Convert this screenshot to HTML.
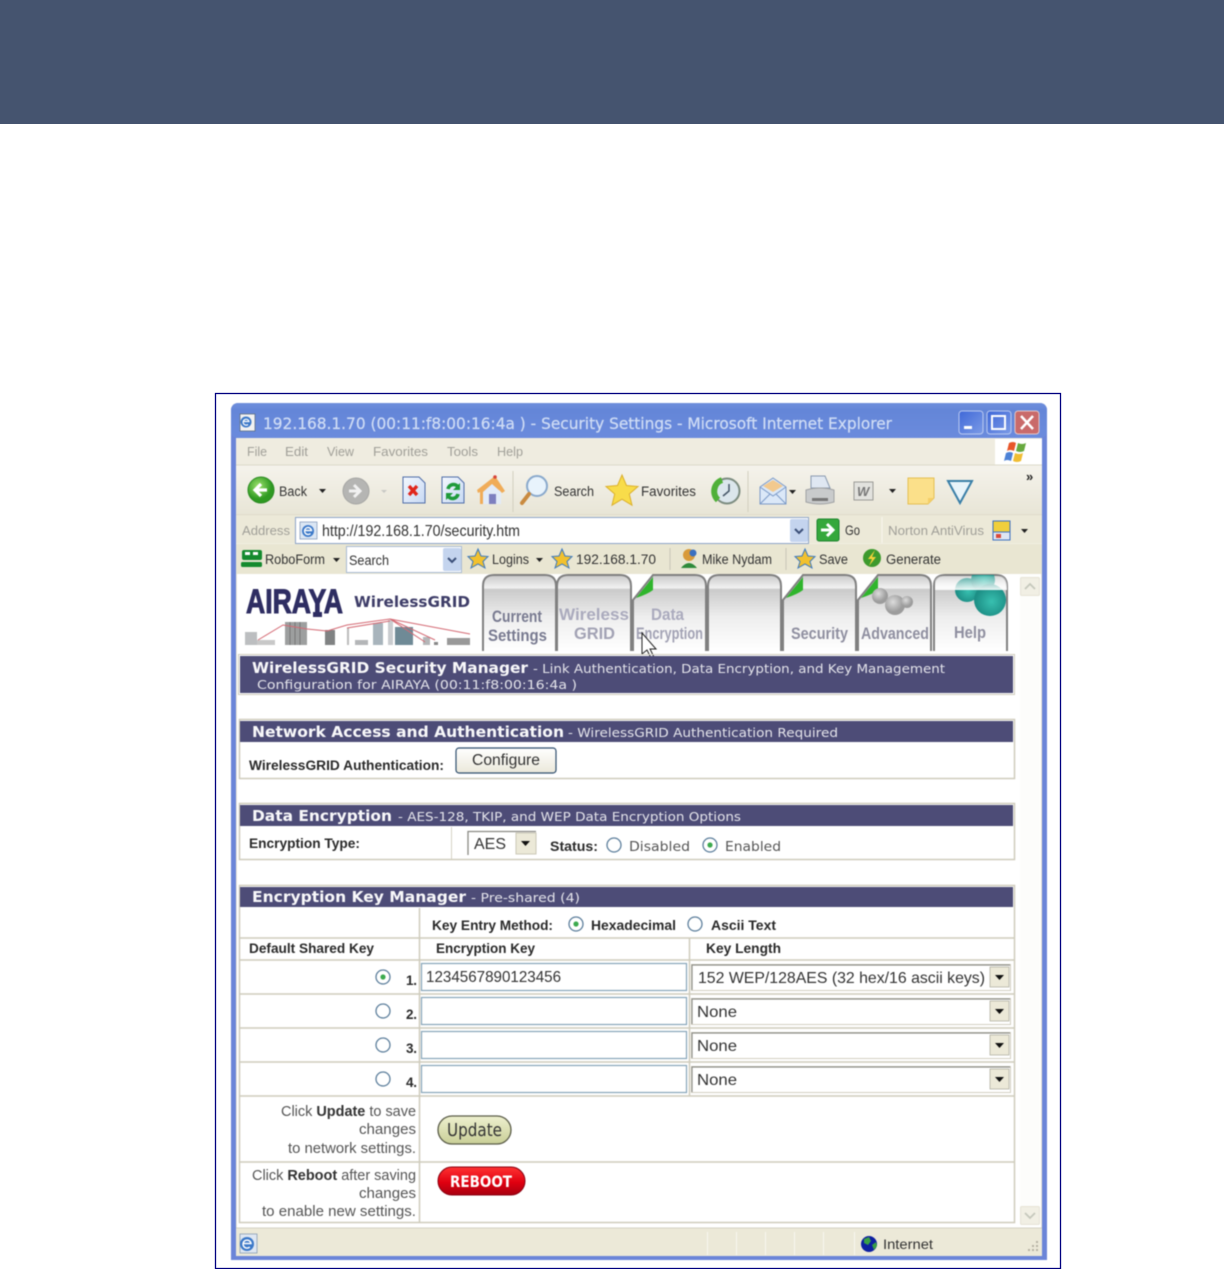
<!DOCTYPE html>
<html><head><meta charset="utf-8"><title>Security Settings</title>
<style>
html,body{margin:0;padding:0;background:#fff;width:1224px;height:1269px;overflow:hidden}
svg{display:block;position:absolute;left:0;top:0}
text{white-space:pre}
.s{font-family:"Liberation Sans",sans-serif}
.d{font-family:"DejaVu Sans",sans-serif}
.b{font-weight:bold}
.w{fill:#fff;font-family:"DejaVu Sans",sans-serif;font-size:12px;fill-opacity:.85}
.h{fill:#fff;font-family:"DejaVu Sans",sans-serif;font-weight:bold;font-size:15px;fill-opacity:.96}
.m{fill:#a09f98;font-family:"Liberation Sans",sans-serif;font-size:13px}
.t{fill:#333;font-family:"Liberation Sans",sans-serif;font-size:13.5px}
.k{fill:#2a2a2a;font-family:"Liberation Sans",sans-serif;font-weight:bold;font-size:13.5px}
.g{fill:#555;font-family:"Liberation Sans",sans-serif;font-size:14.5px}
.f{fill:#333;font-family:"Liberation Sans",sans-serif;font-size:16px}
.tab{font-family:"Liberation Sans",sans-serif;font-weight:bold;font-size:17px}
</style></head><body>
<svg width="1224" height="1269" viewBox="0 0 1224 1269" xmlns="http://www.w3.org/2000/svg">
<defs>
<linearGradient id="tb" x1="0" y1="0" x2="0" y2="1"><stop offset="0" stop-color="#6f8fdc"/><stop offset=".2" stop-color="#6486d8"/><stop offset="1" stop-color="#6b8bdd"/></linearGradient>
<linearGradient id="tg" x1="0" y1="0" x2="0" y2="1"><stop offset="0" stop-color="#c8c8c8"/><stop offset=".17" stop-color="#f2f2f2"/><stop offset=".19" stop-color="#cacaca"/><stop offset=".55" stop-color="#eeeeee"/><stop offset="1" stop-color="#fff"/></linearGradient>
<linearGradient id="band" x1="0" y1="0" x2="0" y2="1"><stop offset="0" stop-color="#fff" stop-opacity=".25"/><stop offset="1" stop-color="#fff" stop-opacity=".9"/></linearGradient>
<linearGradient id="tool" x1="0" y1="0" x2="0" y2="1"><stop offset="0" stop-color="#f5f3ec"/><stop offset="1" stop-color="#e8e5d6"/></linearGradient>
<linearGradient id="upd" x1="0" y1="0" x2="0" y2="1"><stop offset="0" stop-color="#eef0cf"/><stop offset="1" stop-color="#c9cf98"/></linearGradient>
<linearGradient id="red" x1="0" y1="0" x2="0" y2="1"><stop offset="0" stop-color="#f33"/><stop offset=".55" stop-color="#e00010"/><stop offset="1" stop-color="#a80010"/></linearGradient>
<linearGradient id="cfg" x1="0" y1="0" x2="0" y2="1"><stop offset="0" stop-color="#fff"/><stop offset="1" stop-color="#ebe8da"/></linearGradient>
<linearGradient id="min" x1="0" y1="0" x2="1" y2="1"><stop offset="0" stop-color="#3f68d8"/><stop offset="1" stop-color="#7c9be6"/></linearGradient>
<linearGradient id="page" x1="0" y1="0" x2="1" y2="1"><stop offset="0" stop-color="#f4f8fe"/><stop offset="1" stop-color="#c7d9f4"/></linearGradient>
<radialGradient id="gb" cx=".4" cy=".35"><stop offset="0" stop-color="#9fe36e"/><stop offset="1" stop-color="#2f9a22"/></radialGradient>
<radialGradient id="ball" cx=".4" cy=".35"><stop offset="0" stop-color="#dcdcdc"/><stop offset="1" stop-color="#9c9c9c"/></radialGradient>
<radialGradient id="teal" cx=".55" cy=".55"><stop offset="0" stop-color="#38c0b0"/><stop offset="1" stop-color="#1d8f86"/></radialGradient>
<clipPath id="helpclip"><path d="M934 651V586q0-11 11-11h51q11 0 11 11v65z"/></clipPath>
<g id="r"><circle r="7" fill="#fff" stroke="#5d7f9c" stroke-width="1.3"/></g>
<g id="rs"><circle r="7" fill="#fff" stroke="#5d7f9c" stroke-width="1.3"/><circle r="2.6" fill="#3daa4e"/></g>
<g id="sb"><rect width="19" height="20" fill="#ece9d8" stroke="#aaa89a" stroke-width=".7"/><path d="M5 8h9l-4.500 5z" fill="#111"/></g>
</defs>

<rect x="0" y="0" width="1224" height="124" fill="#45546f"/>
<rect x="215.500" y="393.500" width="845" height="875" fill="#fff" stroke="#00007f" stroke-width="1.300"/>

<g style="filter:blur(.5px)">
<!-- window -->
<path d="M231 411 Q231 403 239 403 H1039 Q1047 403 1047 411 V1260 H231 Z" fill="#6b85d8"/>
<rect x="231" y="403" width="816" height="35" rx="7" fill="url(#tb)"/>
<rect x="236" y="438" width="806" height="818" fill="#ece9d8"/>
<text class="d" x="263" y="429" font-size="16" fill="#cfdcf5" stroke="#cfdcf5" stroke-width=".25" textLength="629" lengthAdjust="spacingAndGlyphs">192.168.1.70 (00:11:f8:00:16:4a ) - Security Settings - Microsoft Internet Explorer</text>
<rect x="240" y="414" width="15" height="17" fill="#f2f2f2" stroke="#567" stroke-width=".7"/><circle cx="246" cy="422" r="5.500" fill="#3b78c8"/><path d="M243 421.500h6a3 3 0 1 0-1 3" stroke="#fff" stroke-width="1.200" fill="none"/>
<rect x="959" y="411" width="24" height="23" rx="3" fill="url(#min)" stroke="#b9c9f0"/><rect x="964" y="426" width="8" height="3" fill="#fff"/>
<rect x="987" y="411" width="24" height="23" rx="3" fill="url(#min)" stroke="#b9c9f0"/><rect x="992" y="416" width="13" height="13" fill="none" stroke="#fff" stroke-width="2"/>
<rect x="1015" y="411" width="24" height="23" rx="3" fill="#c96a6a" stroke="#e3c8c8"/><path d="M1021 416 L1033 429 M1033 416 L1021 429" stroke="#fff" stroke-width="2.500"/>

<!-- menu -->
<rect x="236" y="438" width="806" height="27" fill="#efece0"/>
<rect x="995" y="439" width="47" height="26" fill="#fff"/>
<path d="M1009 443 q4-2 7 0 l-2 8 q-4-2-7 0z" fill="#e8562a"/><path d="M1018 443 q4 2 8 0 l-2 8 q-4 2-8 0z" fill="#67a93f"/><path d="M1006 453 q4-2 7 0 l-2 8 q-4-2-7 0z" fill="#4d82d6"/><path d="M1015 453 q4 2 8 0 l-2 8 q-4 2-8 0z" fill="#f0bd32"/>
<text class="m" x="247" y="456" textLength="20" lengthAdjust="spacingAndGlyphs">File</text>
<text class="m" x="285" y="456" textLength="23" lengthAdjust="spacingAndGlyphs">Edit</text>
<text class="m" x="327" y="456" textLength="27" lengthAdjust="spacingAndGlyphs">View</text>
<text class="m" x="373" y="456" textLength="55" lengthAdjust="spacingAndGlyphs">Favorites</text>
<text class="m" x="447" y="456" textLength="31" lengthAdjust="spacingAndGlyphs">Tools</text>
<text class="m" x="497" y="456" textLength="26" lengthAdjust="spacingAndGlyphs">Help</text>

<!-- toolbar -->
<rect x="236" y="465" width="806" height="50" fill="url(#tool)"/>
<line x1="236" y1="465" x2="1042" y2="465" fill="none" stroke="#dcd9c9"/>
<line x1="236" y1="515" x2="1042" y2="515" fill="none" stroke="#d5d2c2"/>
<circle cx="261" cy="490" r="13" fill="url(#gb)" stroke="#2b8a22"/><path d="M267 490h-10M261 484l-6 6 6 6" fill="none" stroke="#fff" stroke-width="3.200"/>
<text class="t" x="279" y="496" textLength="28" lengthAdjust="spacingAndGlyphs">Back</text>
<path d="M319 489h7l-3.500 4z" fill="#222"/>
<circle cx="356" cy="491" r="13" fill="#b5b5b3" stroke="#a5a5a3"/><path d="M349 491h11M354 485l6 6-6 6" fill="none" stroke="#f1f1f1" stroke-width="3"/>
<path d="M381 490h6l-3 3z" fill="#c8c8c4"/>
<path d="M403 477h16l6 6v20h-22z" fill="url(#page)" stroke="#4e6ca8"/><path d="M409 486 l8 9 M417 486 l-8 9" stroke="#e0261c" stroke-width="3.400"/>
<path d="M442 477h16l6 6v20h-22z" fill="url(#page)" stroke="#4e6ca8"/><path d="M448 489a5.500 5.500 0 0 1 10-2M458 494a5.500 5.500 0 0 1-10 2" fill="none" stroke="#1f9a3a" stroke-width="3.600"/><path d="M460 483v7h-7zM446 500v-7h7z" fill="#1f9a3a"/>
<path d="M495 476l10 15-3 2-3-3v14h-19v-12l-2 1-1-3z" fill="#f0ac58"/><path d="M483 492l9-8 9 8v12h-18z" fill="#e2ebf8"/><rect x="489" y="494" width="7" height="10" fill="#7d7fbf"/><circle cx="495" cy="477" r="1.800" fill="#d6453a"/>
<line x1="513" y1="471" x2="513" y2="512" fill="none" stroke="#d2cfbf"/>
<circle cx="537" cy="486" r="10" fill="#e8f3fc" stroke="#8aa9cc" stroke-width="2"/><line x1="529" y1="494" x2="522" y2="503" stroke="#c98a3f" stroke-width="4" stroke-linecap="round"/>
<text class="t" x="554" y="496" textLength="40" lengthAdjust="spacingAndGlyphs">Search</text>
<path d="M622 475l4.500 10.500 11.500 1-8.700 7.500 2.700 11.200-10-6-10 6 2.700-11.200-8.700-7.500 11.500-1z" fill="#f8dc4a" stroke="#dcb02a"/>
<text class="t" x="641" y="496" textLength="55" lengthAdjust="spacingAndGlyphs">Favorites</text>
<circle cx="727" cy="491" r="12.500" fill="#dbe6ec" stroke="#7c8c80" stroke-width="2"/><path d="M718 500a12 12 0 0 1 4-20" fill="none" stroke="#4fb038" stroke-width="6"/><path d="M729 484v7l-6 5" fill="none" stroke="#456" stroke-width="1.500"/>
<line x1="748" y1="471" x2="748" y2="512" fill="none" stroke="#d2cfbf"/>
<path d="M760 487l13-9 13 9v17h-26z" fill="#dbe8f8" stroke="#7d9bc8"/><path d="M763 486l10-6 10 6-10 6z" fill="#f2c98e"/><path d="M760 487l13 9 13-9M760 504l10-10M786 504l-10-10" fill="none" stroke="#7d9bc8"/>
<path d="M789 490h7l-3.500 4z" fill="#222"/>
<path d="M811 476h14l5 12h-19z" fill="#dfe7f2" stroke="#8a9ab0"/><path d="M806 490q14-4 28 0v12q-14 4-28 0z" fill="#c9cbcc" stroke="#a0a2a4"/><rect x="812" y="498" width="16" height="3" fill="#777"/>
<rect x="854" y="482" width="19" height="18" fill="#e2e2de" stroke="#9a9a96"/><text class="s" x="857" y="496" font-size="13" font-style="italic" font-weight="bold" fill="#777">W</text>
<path d="M889 489h7l-3.500 4z" fill="#222"/>
<path d="M908 478h26v20l-6 6h-20z" fill="#fbe08a" stroke="#e5bf52"/><path d="M934 498l-6 6v-6z" fill="#f5ce66"/>
<path d="M948 481h24l-12 22z" fill="#e8f4fa" stroke="#3a7fa8" stroke-width="2"/>
<text class="s b" x="1026" y="481" font-size="13" fill="#222">»</text>

<!-- address -->
<rect x="236" y="515" width="806" height="29" fill="#ece9d8"/>
<line x1="236" y1="544" x2="1042" y2="544" fill="none" stroke="#f6f4ec"/>
<text class="m" x="242" y="535" font-size="14" textLength="48" lengthAdjust="spacingAndGlyphs">Address</text>
<rect x="295.500" y="517.500" width="513" height="26" fill="#fff" stroke="#8ea5c8"/>
<rect x="300" y="522" width="17" height="17" fill="#dbe6f4" stroke="#7b91b3" stroke-width=".7"/><circle cx="308" cy="531" r="6" fill="#3b78c8"/><path d="M304.500 530.500h7a3.500 3.500 0 1 0-1 3" fill="none" stroke="#fff" stroke-width="1.400"/>
<text class="f" x="322" y="536" font-size="14" fill="#222" textLength="198" lengthAdjust="spacingAndGlyphs">http://192.168.1.70/security.htm</text>
<rect x="790" y="519" width="18" height="23" rx="2" fill="#c4d4ee"/><path d="M795 529l4 4 4-4" fill="none" stroke="#3b4f78" stroke-width="2"/>
<rect x="817" y="519" width="22" height="22" rx="2" fill="#35a83b" stroke="#1d8430"/><path d="M821 530h11M827 524l6 6-6 6" fill="none" stroke="#fff" stroke-width="3"/>
<text class="t" x="845" y="535" textLength="15" lengthAdjust="spacingAndGlyphs">Go</text>
<line x1="882" y1="517" x2="882" y2="543" fill="none" stroke="#f8f6ef"/>
<text class="m" x="888" y="535" font-size="14" textLength="96" lengthAdjust="spacingAndGlyphs">Norton AntiVirus</text>
<rect x="993" y="521" width="17" height="11" fill="#f0cf3c" stroke="#3c6fc0"/><rect x="993" y="532" width="17" height="8" fill="#dfe6f2" stroke="#3c6fc0"/><rect x="996" y="534" width="5" height="4" fill="#d9483a"/>
<path d="M1021 529h7l-3.500 4z" fill="#222"/>

<!-- roboform -->
<rect x="236" y="544" width="806" height="30" fill="#e9e6d2"/>
<rect x="242" y="550" width="20" height="10" rx="2" fill="#148a2e"/><rect x="245" y="552" width="5" height="3" fill="#fff"/><rect x="253" y="552" width="5" height="3" fill="#fff"/><rect x="241" y="562" width="21" height="5" rx="1.500" fill="#148a2e"/>
<text class="t" x="265" y="564" textLength="60" lengthAdjust="spacingAndGlyphs">RoboForm</text>
<path d="M333 558h7l-3.500 4z" fill="#222"/>
<rect x="346.500" y="546.500" width="115" height="26" fill="#fff" stroke="#a9bbd4"/>
<text class="t" x="349" y="565" textLength="40" lengthAdjust="spacingAndGlyphs">Search</text>
<rect x="443" y="548" width="18" height="23" rx="2" fill="#c4d4ee"/><path d="M448 558l4 4 4-4" fill="none" stroke="#3b4f78" stroke-width="2"/>
<path d="M478 549l3 7 7 .5-5 5 2 6.500-7-4-7 4 2-6.500-5-5 7-.5z" fill="#f2c12e" stroke="#3a78c0"/>
<text class="t" x="492" y="564" textLength="37" lengthAdjust="spacingAndGlyphs">Logins</text>
<path d="M536 558h7l-3.500 4z" fill="#222"/>
<path d="M562 549l3 7 7 .5-5 5 2 6.500-7-4-7 4 2-6.500-5-5 7-.5z" fill="#f2c12e" stroke="#3a78c0"/>
<text class="t" x="576" y="564" textLength="80" lengthAdjust="spacingAndGlyphs">192.168.1.70</text>
<line x1="670" y1="548" x2="670" y2="570" fill="none" stroke="#c9c6b6"/>
<circle cx="689" cy="555" r="6" fill="#d89a3a"/><path d="M681 568q8-10 16 0z" fill="#2e8a3a"/><circle cx="693" cy="553" r="3.500" fill="#3a70c0"/>
<text class="t" x="702" y="564" textLength="70" lengthAdjust="spacingAndGlyphs">Mike Nydam</text>
<line x1="786" y1="548" x2="786" y2="570" fill="none" stroke="#c9c6b6"/>
<path d="M805 549l3 7 7 .5-5 5 2 6.500-7-4-7 4 2-6.500-5-5 7-.5z" fill="#f2c12e" stroke="#3a78c0"/>
<text class="t" x="819" y="564" textLength="29" lengthAdjust="spacingAndGlyphs">Save</text>
<circle cx="872" cy="558" r="9" fill="#3d9a2d"/><path d="M875 550l-7 9h4l-3 7 7-9h-4z" fill="#f5d23a"/>
<text class="t" x="886" y="564" textLength="55" lengthAdjust="spacingAndGlyphs">Generate</text>

<!-- content -->
<rect x="237" y="574" width="804" height="654" fill="#fff"/>
<rect x="1020" y="575" width="20" height="650" fill="#fdfdfb"/>
<rect x="1020.500" y="577.500" width="19" height="18" rx="1.500" fill="#f1efe4" stroke="#e6e3d6"/><path d="M1025 589l5-5 5 5" fill="none" stroke="#c6c8bc" stroke-width="1.800"/>
<rect x="1020.500" y="1206.500" width="19" height="18" rx="1.500" fill="#f1efe4" stroke="#e6e3d6"/><path d="M1025 1213l5 5 5-5" fill="none" stroke="#c6c8bc" stroke-width="1.800"/>

<!-- logo -->
<text class="s b" x="246" y="613" font-size="34" fill="#2e2d62" stroke="#2e2d62" stroke-width="1" textLength="97" lengthAdjust="spacingAndGlyphs">AIRAYA</text>
<rect x="313" y="612" width="9" height="5" fill="#2e2d62"/>
<text class="d b" x="354" y="607" font-size="15" fill="#3e3d68" textLength="116" lengthAdjust="spacingAndGlyphs">WirelessGRID</text>
<g>
<rect x="245" y="632" width="12" height="13" fill="#bcbec0"/><rect x="257" y="640" width="18" height="5" fill="#c8c8c8"/>
<rect x="285" y="622" width="22" height="23" fill="#9d9f9f"/><path d="M290 622v23M295 622v23M300 622v23" stroke="#777" stroke-width="1"/>
<rect x="325" y="630" width="10" height="15" fill="#808283"/>
<rect x="347" y="628" width="2" height="17" fill="#bbb"/><rect x="355" y="640" width="13" height="5" fill="#b4b6b8"/>
<rect x="373" y="623" width="10" height="22" fill="#a8b4bc"/>
<rect x="388" y="620" width="5" height="25" fill="#c9cccf"/><rect x="395" y="627" width="18" height="18" fill="#6f8a96"/>
<rect x="423" y="637" width="7" height="8" fill="#b4b6b8"/><rect x="434" y="642" width="4" height="3" fill="#888"/><rect x="447" y="638" width="23" height="7" fill="#999"/>
</g>
<path d="M258 640L283 625L307 629L327 631L347 625L390 619L470 634M390 619L435 640M390 619L425 642M347 628L390 621" fill="none" stroke="#d46a74" stroke-width="1"/>

<!-- tabs -->
<g fill="url(#tg)" stroke="#808080" stroke-width="2">
<path d="M483 651V586q0-11 11-11h51q11 0 11 11v65"/>
<path d="M557 651V586q0-11 11-11h52q11 0 11 11v65"/>
<path d="M633 651V600l20-25h42q11 0 11 11v65"/>
<path d="M708 651V586q0-11 11-11h51q11 0 11 11v65"/>
<path d="M783 651V600l20-25h42q11 0 11 11v65"/>
<path d="M858 651V600l20-25h42q11 0 11 11v65"/>
<path d="M934 651V586q0-11 11-11h51q11 0 11 11v65"/>
</g>
<g fill="#2fb52c"><path d="M636 598L653 577V590Q648 594 636 598z"/><path d="M786 598L803 577V590Q798 594 786 598z"/><path d="M861 598L878 577V590Q873 594 861 598z"/></g>
<g fill="url(#ball)"><circle cx="880" cy="596" r="8"/><circle cx="895" cy="605" r="10"/><circle cx="907" cy="602" r="6"/></g>
<g clip-path="url(#helpclip)">
<g fill="url(#teal)"><circle cx="967" cy="590" r="12"/><circle cx="983" cy="580" r="12"/><circle cx="990" cy="600" r="16"/></g>
<rect x="935" y="576" width="72" height="14" fill="url(#band)"/>
</g>
<text class="tab" x="492" y="622" fill="#787a90" textLength="50" lengthAdjust="spacingAndGlyphs">Current</text>
<text class="tab" x="488" y="641" fill="#787a90" textLength="59" lengthAdjust="spacingAndGlyphs">Settings</text>
<text class="tab" x="559" y="620" fill="#aaaabd" textLength="70" lengthAdjust="spacingAndGlyphs">Wireless</text>
<text class="tab" x="574" y="639" fill="#a2a2b4" font-weight="normal" textLength="41" lengthAdjust="spacingAndGlyphs">GRID</text>
<text class="tab" x="651" y="620" fill="#aaaabd" textLength="33" lengthAdjust="spacingAndGlyphs">Data</text>
<text class="tab" x="636" y="639" fill="#a2a2b4" textLength="67" lengthAdjust="spacingAndGlyphs">Encryption</text>
<text class="tab" x="791" y="639" fill="#8f8fa0" textLength="57" lengthAdjust="spacingAndGlyphs">Security</text>
<text class="tab" x="861" y="639" fill="#8f8fa0" textLength="68" lengthAdjust="spacingAndGlyphs">Advanced</text>
<text class="tab" x="954" y="638" fill="#8f8fa0" textLength="32" lengthAdjust="spacingAndGlyphs">Help</text>
<path d="M642 633v21l5-4 4 8 3-1-4-8h6z" fill="#fff" stroke="#222"/>

<!-- section 1 -->
<rect x="238.500" y="654.500" width="776" height="40" fill="none" stroke="#cfccbc"/>
<rect x="240" y="656" width="773" height="37" fill="#4d4c77"/>
<text class="h" x="252" y="673" textLength="276" lengthAdjust="spacingAndGlyphs">WirelessGRID Security Manager</text>
<text class="w" x="533" y="673" textLength="412" lengthAdjust="spacingAndGlyphs">- Link Authentication, Data Encryption, and Key Management</text>
<text class="w" x="257" y="689" textLength="320" lengthAdjust="spacingAndGlyphs">Configuration for AIRAYA (00:11:f8:00:16:4a )</text>

<!-- section 2 -->
<rect x="239.500" y="719.500" width="775" height="59" fill="#fff" stroke="#cfccbc" stroke-width="1.500"/>
<rect x="240" y="721" width="773" height="21" fill="#4d4c77"/>
<text class="h" x="252" y="737" textLength="312" lengthAdjust="spacingAndGlyphs">Network Access and Authentication</text>
<text class="w" x="568" y="737" textLength="270" lengthAdjust="spacingAndGlyphs">- WirelessGRID Authentication Required</text>
<text class="k" x="249" y="770" textLength="195" lengthAdjust="spacingAndGlyphs">WirelessGRID Authentication:</text>
<rect x="456" y="748" width="100" height="25" rx="3" fill="url(#cfg)" stroke="#2f4f6f" stroke-width="1.200"/>
<text class="s" x="472" y="765" font-size="15.500" fill="#333" textLength="68" lengthAdjust="spacingAndGlyphs">Configure</text>

<!-- section 3 -->
<rect x="239.500" y="803.500" width="775" height="56" fill="#fff" stroke="#cfccbc" stroke-width="1.500"/>
<rect x="240" y="805" width="773" height="21" fill="#4d4c77"/>
<text class="h" x="252" y="821" textLength="140" lengthAdjust="spacingAndGlyphs">Data Encryption</text>
<text class="w" x="398" y="821" textLength="343" lengthAdjust="spacingAndGlyphs">- AES-128, TKIP, and WEP Data Encryption Options</text>
<text class="k" x="249" y="848" textLength="111" lengthAdjust="spacingAndGlyphs">Encryption Type:</text>
<line x1="451.500" y1="827" x2="451.500" y2="859" stroke="#d6d3c5"/>
<path d="M468 855V831.500H536" fill="none" stroke="#8a8a84" stroke-width="1.300"/>
<text class="f" x="474" y="849" font-size="17" textLength="32" lengthAdjust="spacingAndGlyphs">AES</text>
<rect x="516" y="833" width="20" height="21" fill="#ece9d8" stroke="#cbc8b8"/><path d="M521 841h9l-4.500 5z" fill="#111"/>
<text class="k" x="550" y="851" fill="#444" textLength="48" lengthAdjust="spacingAndGlyphs">Status:</text>
<use href="#r" x="614" y="845"/>
<text class="d" x="629" y="851" font-size="13.500" fill="#555" textLength="61" lengthAdjust="spacingAndGlyphs">Disabled</text>
<use href="#rs" x="710" y="845"/>
<text class="d" x="725" y="851" font-size="13.500" fill="#555" textLength="56" lengthAdjust="spacingAndGlyphs">Enabled</text>

<!-- section 4 -->
<rect x="239.500" y="885.500" width="775" height="337" fill="#fff" stroke="#cfccbc" stroke-width="1.500"/>
<rect x="240" y="887" width="773" height="20" fill="#4d4c77"/>
<text class="h" x="252" y="902" textLength="214" lengthAdjust="spacingAndGlyphs">Encryption Key Manager</text>
<text class="w" x="471" y="902" textLength="109" lengthAdjust="spacingAndGlyphs">- Pre-shared (4)</text>
<g stroke="#cfccbc" stroke-width="1.500" fill="none">
<path d="M240 938H1014M240 960H1014M240 994H1014M240 1028H1014M240 1062H1014M240 1096H1014M240 1162H1014"/>
<path d="M419.500 908V1222M689.500 938V1096"/>
</g>
<text class="k" x="432" y="930" textLength="121" lengthAdjust="spacingAndGlyphs">Key Entry Method:</text>
<use href="#rs" x="576" y="924"/>
<text class="k" x="591" y="930" textLength="85" lengthAdjust="spacingAndGlyphs">Hexadecimal</text>
<use href="#r" x="695" y="924"/>
<text class="k" x="711" y="930" textLength="65" lengthAdjust="spacingAndGlyphs">Ascii Text</text>
<text class="k" x="249" y="953" textLength="125" lengthAdjust="spacingAndGlyphs">Default Shared Key</text>
<text class="k" x="436" y="953" textLength="99" lengthAdjust="spacingAndGlyphs">Encryption Key</text>
<text class="k" x="706" y="953" textLength="75" lengthAdjust="spacingAndGlyphs">Key Length</text>

<use href="#rs" x="383" y="977"/><use href="#r" x="383" y="1011"/><use href="#r" x="383" y="1045"/><use href="#r" x="383" y="1079"/>
<text class="k" x="406" y="985" font-size="12" textLength="11">1.</text>
<text class="k" x="406" y="1019" font-size="12" textLength="11">2.</text>
<text class="k" x="406" y="1053" font-size="12" textLength="11">3.</text>
<text class="k" x="406" y="1087" font-size="12" textLength="11">4.</text>
<g fill="#fff" stroke="#86a5b8" stroke-width="1.200">
<rect x="421.500" y="963.500" width="265" height="27"/><rect x="421.500" y="997.500" width="265" height="27"/><rect x="421.500" y="1031.500" width="265" height="27"/><rect x="421.500" y="1065.500" width="265" height="27"/>
</g>
<text class="f" x="426" y="982" textLength="135" lengthAdjust="spacingAndGlyphs">1234567890123456</text>
<g fill="#fff" stroke="#d2cfc2" stroke-width="1">
<rect x="691.500" y="964.500" width="319" height="26"/><rect x="691.500" y="998.500" width="319" height="26"/><rect x="691.500" y="1032.500" width="319" height="26"/><rect x="691.500" y="1066.500" width="319" height="26"/>
</g>
<g fill="none" stroke="#8f8f88" stroke-width="1.200">
<path d="M692 990V965H1010"/><path d="M692 1024V999H1010"/><path d="M692 1058V1033H1010"/><path d="M692 1092V1067H1010"/>
</g>
<text class="f" x="698" y="983" textLength="287" lengthAdjust="spacingAndGlyphs">152 WEP/128AES (32 hex/16 ascii keys)</text>
<text class="f" x="697" y="1017" textLength="40" lengthAdjust="spacingAndGlyphs">None</text>
<text class="f" x="697" y="1051" textLength="40" lengthAdjust="spacingAndGlyphs">None</text>
<text class="f" x="697" y="1085" textLength="40" lengthAdjust="spacingAndGlyphs">None</text>
<use href="#sb" x="990" y="967"/><use href="#sb" x="990" y="1001"/><use href="#sb" x="990" y="1035"/><use href="#sb" x="990" y="1069"/>

<text class="g" x="281" y="1116" textLength="135" lengthAdjust="spacingAndGlyphs">Click <tspan font-weight="bold" fill="#333">Update</tspan> to save</text>
<text class="g" x="359" y="1134" textLength="57" lengthAdjust="spacingAndGlyphs">changes</text>
<text class="g" x="288" y="1153" textLength="128" lengthAdjust="spacingAndGlyphs">to network settings.</text>
<text class="g" x="252" y="1180" textLength="164" lengthAdjust="spacingAndGlyphs">Click <tspan font-weight="bold" fill="#333">Reboot</tspan> after saving</text>
<text class="g" x="359" y="1198" textLength="57" lengthAdjust="spacingAndGlyphs">changes</text>
<text class="g" x="262" y="1216" textLength="154" lengthAdjust="spacingAndGlyphs">to enable new settings.</text>

<rect x="438" y="1116" width="73" height="28" rx="14" fill="url(#upd)" stroke="#5a5c48" stroke-width="1.300"/>
<text class="d" x="447" y="1136" font-size="18" fill="#333" textLength="55" lengthAdjust="spacingAndGlyphs">Update</text>
<rect x="438" y="1167" width="87" height="28" rx="14" fill="url(#red)" stroke="#8a0010"/>
<text class="d b" x="450" y="1187" font-size="16" fill="#fff" textLength="62" lengthAdjust="spacingAndGlyphs">REBOOT</text>

<!-- status -->
<rect x="236" y="1228" width="806" height="28" fill="#ece9d8"/>
<line x1="236" y1="1228" x2="1042" y2="1228" stroke="#d4d1c2"/>
<g stroke="#f8f7f0"><path d="M707.500 1232V1255M736.500 1232V1255M765.500 1232V1255M794.500 1232V1255M823.500 1232V1255M854.500 1232V1255"/></g>
<rect x="240" y="1234" width="17" height="19" fill="#dfe7f2" stroke="#7a90ad" stroke-width=".7"/><circle cx="247" cy="1244" r="7" fill="#3b78c8"/><path d="M243 1243.500h8a4 4 0 1 0-1.200 3.500" fill="none" stroke="#fff" stroke-width="1.500"/>
<circle cx="869" cy="1244" r="8" fill="#0d1fa0"/><path d="M864 1239l5-2 2 4-3 4-4-2zM872 1245l4-3 1 4-3 4z" fill="#38a045"/>
<text class="t" x="883" y="1249" textLength="50" lengthAdjust="spacingAndGlyphs">Internet</text>
<g fill="#b5b2a3"><rect x="1036" y="1241" width="2" height="2"/><rect x="1032" y="1245" width="2" height="2"/><rect x="1036" y="1245" width="2" height="2"/><rect x="1028" y="1249" width="2" height="2"/><rect x="1032" y="1249" width="2" height="2"/><rect x="1036" y="1249" width="2" height="2"/></g>
</g>
</svg>
</body></html>
